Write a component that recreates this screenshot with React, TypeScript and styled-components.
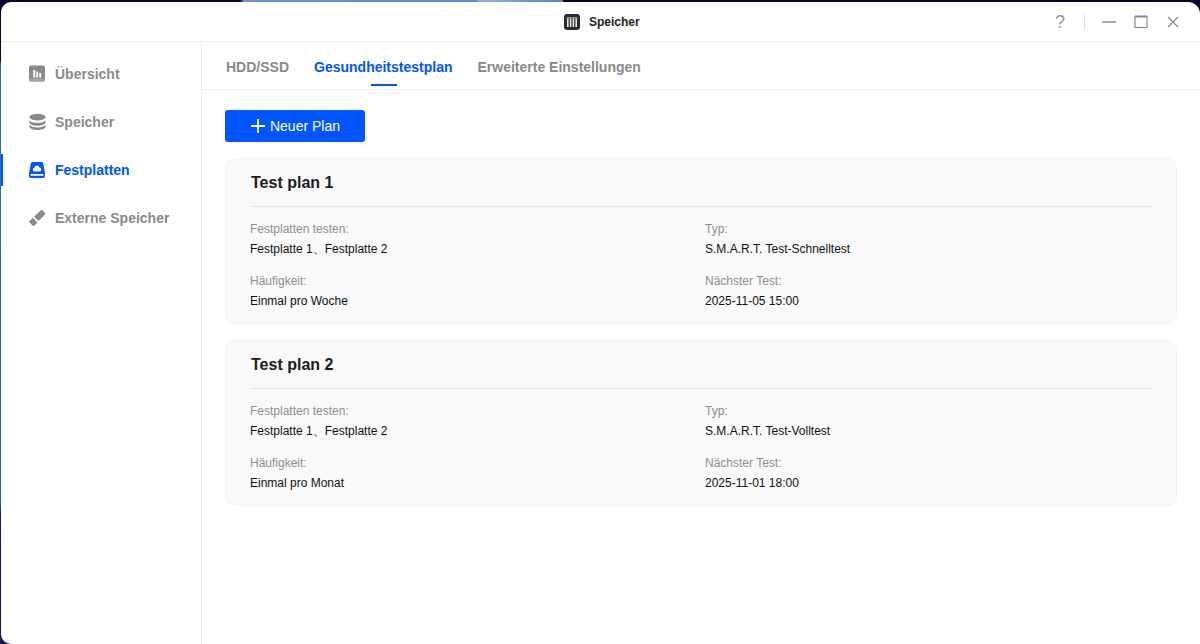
import React from "react";
import styled, { createGlobalStyle } from "styled-components";

const GlobalStyle = createGlobalStyle`
  html, body {
    margin: 0;
    padding: 0;
    height: 100%;
    overflow: hidden;
  }
  body {
    font-family: "Liberation Sans", Arial, sans-serif;
    background-color: #0b0a2e;
  }
`;

const Desktop = styled.div`
  position: relative;
  width: 1200px;
  height: 644px;
  padding: 2px 0 0 1px;
  box-sizing: border-box;
  overflow: hidden;
  background:
    linear-gradient(90deg, #0a0528 0, #0a0528 240px, #6c94c8 244px, #5e8cc6 475px, #8fb2dc 480px, #5d84b8 562px, #0a0528 564px) top / 100% 2px no-repeat,
    linear-gradient(180deg, #0a0528 0, #0a0528 60px, #3a6aa8 64px, #2f62a6 500px, #17204f 515px, #141a48 100%);
`;

const Window = styled.div`
  display: flex;
  flex-direction: column;
  height: 642px;
  background: #fff;
  border-radius: 10px 12px 0 10px;
  overflow: hidden;
`;

const TitleBar = styled.header`
  position: relative;
  flex: none;
  display: flex;
  align-items: center;
  justify-content: flex-end;
  height: 39px;
  padding-right: 21px;
  border-bottom: 1px solid #eeeeee;
`;

const TitleGroup = styled.div`
  position: absolute;
  left: 563px;
  top: 12px;
  display: flex;
  align-items: center;
  gap: 9px;
  font-size: 12px;
  font-weight: 700;
  color: #222;
`;

const WindowControls = styled.div`
  display: flex;
  align-items: center;
`;

const ControlButton = styled.span<{ $gap?: number }>`
  display: flex;
  margin-left: ${(p) => p.$gap ?? 0}px;
`;

const Divider = styled.span`
  width: 1px;
  height: 16px;
  margin-left: 19px;
  background: #e2e2e2;
`;

const HelpMark = styled.span`
  font-size: 18px;
  line-height: 18px;
  color: #999;
`;

const Body = styled.div`
  flex: 1;
  display: flex;
  min-height: 0;
`;

const Sidebar = styled.nav`
  flex: none;
  display: flex;
  flex-direction: column;
  width: 200px;
  padding-top: 8px;
  border-right: 1px solid #eeeeee;
`;

const NavItem = styled.div<{ $active?: boolean }>`
  position: relative;
  display: flex;
  align-items: center;
  gap: 9px;
  height: 48px;
  padding-left: 27px;
  font-size: 14px;
  font-weight: 700;
  color: ${(p) => (p.$active ? "#0055ff" : "#8a8a8a")};

  ${(p) =>
    p.$active &&
    `&::before {
      content: "";
      position: absolute;
      left: 0;
      top: 8px;
      width: 2px;
      height: 32px;
      background: #0055ff;
    }`}
`;

const Main = styled.main`
  flex: 1;
  display: flex;
  flex-direction: column;
  min-width: 0;
`;

const Tabs = styled.div`
  flex: none;
  display: flex;
  gap: 25px;
  height: 47px;
  padding-left: 24px;
  border-bottom: 1px solid #eeeeee;
`;

const Tab = styled.div<{ $active?: boolean }>`
  position: relative;
  padding-top: 17px;
  font-size: 14px;
  line-height: 16px;
  font-weight: 700;
  color: ${(p) => (p.$active ? "#0055ff" : "#8a8a8a")};

  ${(p) =>
    p.$active &&
    `&::after {
      content: "";
      position: absolute;
      left: 50%;
      bottom: 3px;
      width: 26px;
      height: 2px;
      margin-left: -12px;
      background: #0055ff;
    }`}
`;

const Content = styled.div`
  flex: 1;
  display: flex;
  flex-direction: column;
  align-items: flex-start;
  gap: 16px;
  padding: 20px 23px 0 23px;
`;

const PrimaryButton = styled.button`
  display: flex;
  align-items: center;
  justify-content: center;
  gap: 4px;
  width: 140px;
  height: 32px;
  padding: 0;
  border: none;
  border-radius: 3px;
  background: #0055ff;
  color: #fff;
  font-family: inherit;
  font-size: 14px;
`;

const PlanCard = styled.section`
  align-self: stretch;
  box-sizing: border-box;
  height: 166px;
  padding: 0 24px;
  border: 1px solid #f2f2f2;
  border-radius: 10px;
  background: #f9f9f9;
`;

const PlanTitle = styled.h2`
  margin: 0;
  height: 48px;
  padding: 15px 0 0 1px;
  box-sizing: border-box;
  border-bottom: 1px solid #e6e6e6;
  font-size: 16px;
  line-height: 18px;
  font-weight: 700;
  color: #1c1c1c;
`;

const FieldGrid = styled.dl`
  display: grid;
  grid-template-columns: 455px 1fr;
  row-gap: 15px;
  margin: 15px 0 0;
`;

const Field = styled.div`
  display: flex;
  flex-direction: column;
  gap: 3px;
  margin: 0;
`;

const FieldLabel = styled.dt`
  font-size: 12px;
  line-height: 14px;
  color: #8f8f8f;
`;

const FieldValue = styled.dd`
  margin: 0;
  font-size: 12px;
  line-height: 20px;
  height: 20px;
  color: #111;
`;

const OverviewIcon = () => (
  <svg width="18" height="18" viewBox="0 0 18 18">
    <rect x="1" y="0.500" width="16" height="16" rx="2" fill="#8a8a8a" />
    <rect x="1" y="13.500" width="16" height="3" rx="1.500" fill="#a4a4a4" />
    <path fill="#fff" d="M5.200 5h2v7.500h-2zM8.200 6.500h2v6h-2zM11.200 8h2v4.500h-2z" />
  </svg>
);

const StorageIcon = () => (
  <svg width="18" height="18" viewBox="0 0 18 18" fill="#8a8a8a">
    <ellipse cx="9.500" cy="4.200" rx="8" ry="3.400" />
    <path d="M1.500 7.200C3 9 6 9.800 9.500 9.800s6.500-.8 8-2.600v2.300c0 1.900-3.600 3.200-8 3.200s-8-1.300-8-3.200z" />
    <path d="M1.500 11.800c1.500 1.800 4.500 2.600 8 2.600s6.500-.8 8-2.600v2c0 1.900-3.600 3.200-8 3.200s-8-1.300-8-3.200z" />
  </svg>
);

const DiskIcon = () => (
  <svg width="18" height="18" viewBox="0 0 18 18">
    <path fill="#0055ff" d="M4.600 1h8.800c.9 0 1.600.6 1.800 1.500l1.800 10V15a2 2 0 0 1-2 2H3a2 2 0 0 1-2-2v-2.500l1.800-10C3 1.600 3.700 1 4.600 1z" />
    <path fill="#fff" d="M9 4.500a2.500 2.500 0 0 1 2.400 2 2 2 0 0 1-.3 4H6.900a2 2 0 0 1-.3-4A2.500 2.500 0 0 1 9 4.500z" />
    <rect x="2.500" y="13" width="13" height="1.800" rx="0.500" fill="#fff" />
  </svg>
);

const UsbIcon = () => (
  <svg width="18" height="18" viewBox="0 0 18 18" fill="#8a8a8a">
    <path d="M12.800 1.200c.5-.4 1.100-.4 1.500 0l2.800 2.800c.4.400.4 1 0 1.500l-6.600 6.600-4.400-4.400z" />
    <path d="M4.800 8.800l4.700 4.700-3.300 3.300c-.4.400-1 .4-1.400 0L1.500 13.500c-.4-.4-.4-1 0-1.400z" />
  </svg>
);

const AppIcon = () => (
  <svg width="16" height="16" viewBox="0 0 16 16">
    <rect width="16" height="16" rx="3" fill="#2b2b2b" />
    <rect x="2.500" y="3" width="11" height="1.500" fill="#8f8f8f" />
    <path fill="#e6e6e6" d="M3 4.500h1.600V13H3zM5.800 4.500h1.600V13H5.800zM8.600 4.500h1.600V13H8.600zM11.400 4.500H13V13h-1.600z" />
  </svg>
);

const PlusIcon = () => (
  <svg width="16" height="16" viewBox="0 0 16 16" stroke="#fff" strokeWidth="1.800">
    <path d="M8 1v14M1 8h14" />
  </svg>
);

const MinimizeIcon = () => (
  <svg width="14" height="14" viewBox="0 0 14 14" stroke="#8a8a8a" strokeWidth="1.400">
    <path d="M0 7h14" />
  </svg>
);

const MaximizeIcon = () => (
  <svg width="14" height="14" viewBox="0 0 14 14" fill="none" stroke="#8a8a8a">
    <rect x="1" y="1.500" width="12" height="11" strokeWidth="1.200" />
    <path d="M1 1.500h12" strokeWidth="2" />
  </svg>
);

const CloseIcon = () => (
  <svg width="12" height="12" viewBox="0 0 12 12" stroke="#8a8a8a" strokeWidth="1.200">
    <path d="M1 1l10 10M11 1 1 11" />
  </svg>
);

const navItems = [
  { label: "Übersicht", icon: <OverviewIcon /> },
  { label: "Speicher", icon: <StorageIcon /> },
  { label: "Festplatten", icon: <DiskIcon />, active: true },
  { label: "Externe Speicher", icon: <UsbIcon /> },
];

const plans = [
  { title: "Test plan 1", type: "S.M.A.R.T. Test-Schnelltest", frequency: "Einmal pro Woche", next: "2025-11-05 15:00" },
  { title: "Test plan 2", type: "S.M.A.R.T. Test-Volltest", frequency: "Einmal pro Monat", next: "2025-11-01 18:00" },
];

export default function App() {
  return (
    <>
      <GlobalStyle />
      <Desktop>
        <Window>
          <TitleBar>
            <TitleGroup>
              <AppIcon />
              Speicher
            </TitleGroup>
            <WindowControls>
              <HelpMark>?</HelpMark>
              <Divider />
              <ControlButton $gap={17}><MinimizeIcon /></ControlButton>
              <ControlButton $gap={18}><MaximizeIcon /></ControlButton>
              <ControlButton $gap={19}><CloseIcon /></ControlButton>
            </WindowControls>
          </TitleBar>
          <Body>
            <Sidebar>
              {navItems.map((item) => (
                <NavItem key={item.label} $active={item.active}>
                  {item.icon}
                  {item.label}
                </NavItem>
              ))}
            </Sidebar>
            <Main>
              <Tabs>
                <Tab>HDD/SSD</Tab>
                <Tab $active>Gesundheitstestplan</Tab>
                <Tab>Erweiterte Einstellungen</Tab>
              </Tabs>
              <Content>
                <PrimaryButton>
                  <PlusIcon />
                  Neuer Plan
                </PrimaryButton>
                {plans.map((plan) => (
                  <PlanCard key={plan.title}>
                    <PlanTitle>{plan.title}</PlanTitle>
                    <FieldGrid>
                      <Field>
                        <FieldLabel>Festplatten testen:</FieldLabel>
                        <FieldValue>Festplatte 1、Festplatte 2</FieldValue>
                      </Field>
                      <Field>
                        <FieldLabel>Typ:</FieldLabel>
                        <FieldValue>{plan.type}</FieldValue>
                      </Field>
                      <Field>
                        <FieldLabel>Häufigkeit:</FieldLabel>
                        <FieldValue>{plan.frequency}</FieldValue>
                      </Field>
                      <Field>
                        <FieldLabel>Nächster Test:</FieldLabel>
                        <FieldValue>{plan.next}</FieldValue>
                      </Field>
                    </FieldGrid>
                  </PlanCard>
                ))}
              </Content>
            </Main>
          </Body>
        </Window>
      </Desktop>
    </>
  );
}
